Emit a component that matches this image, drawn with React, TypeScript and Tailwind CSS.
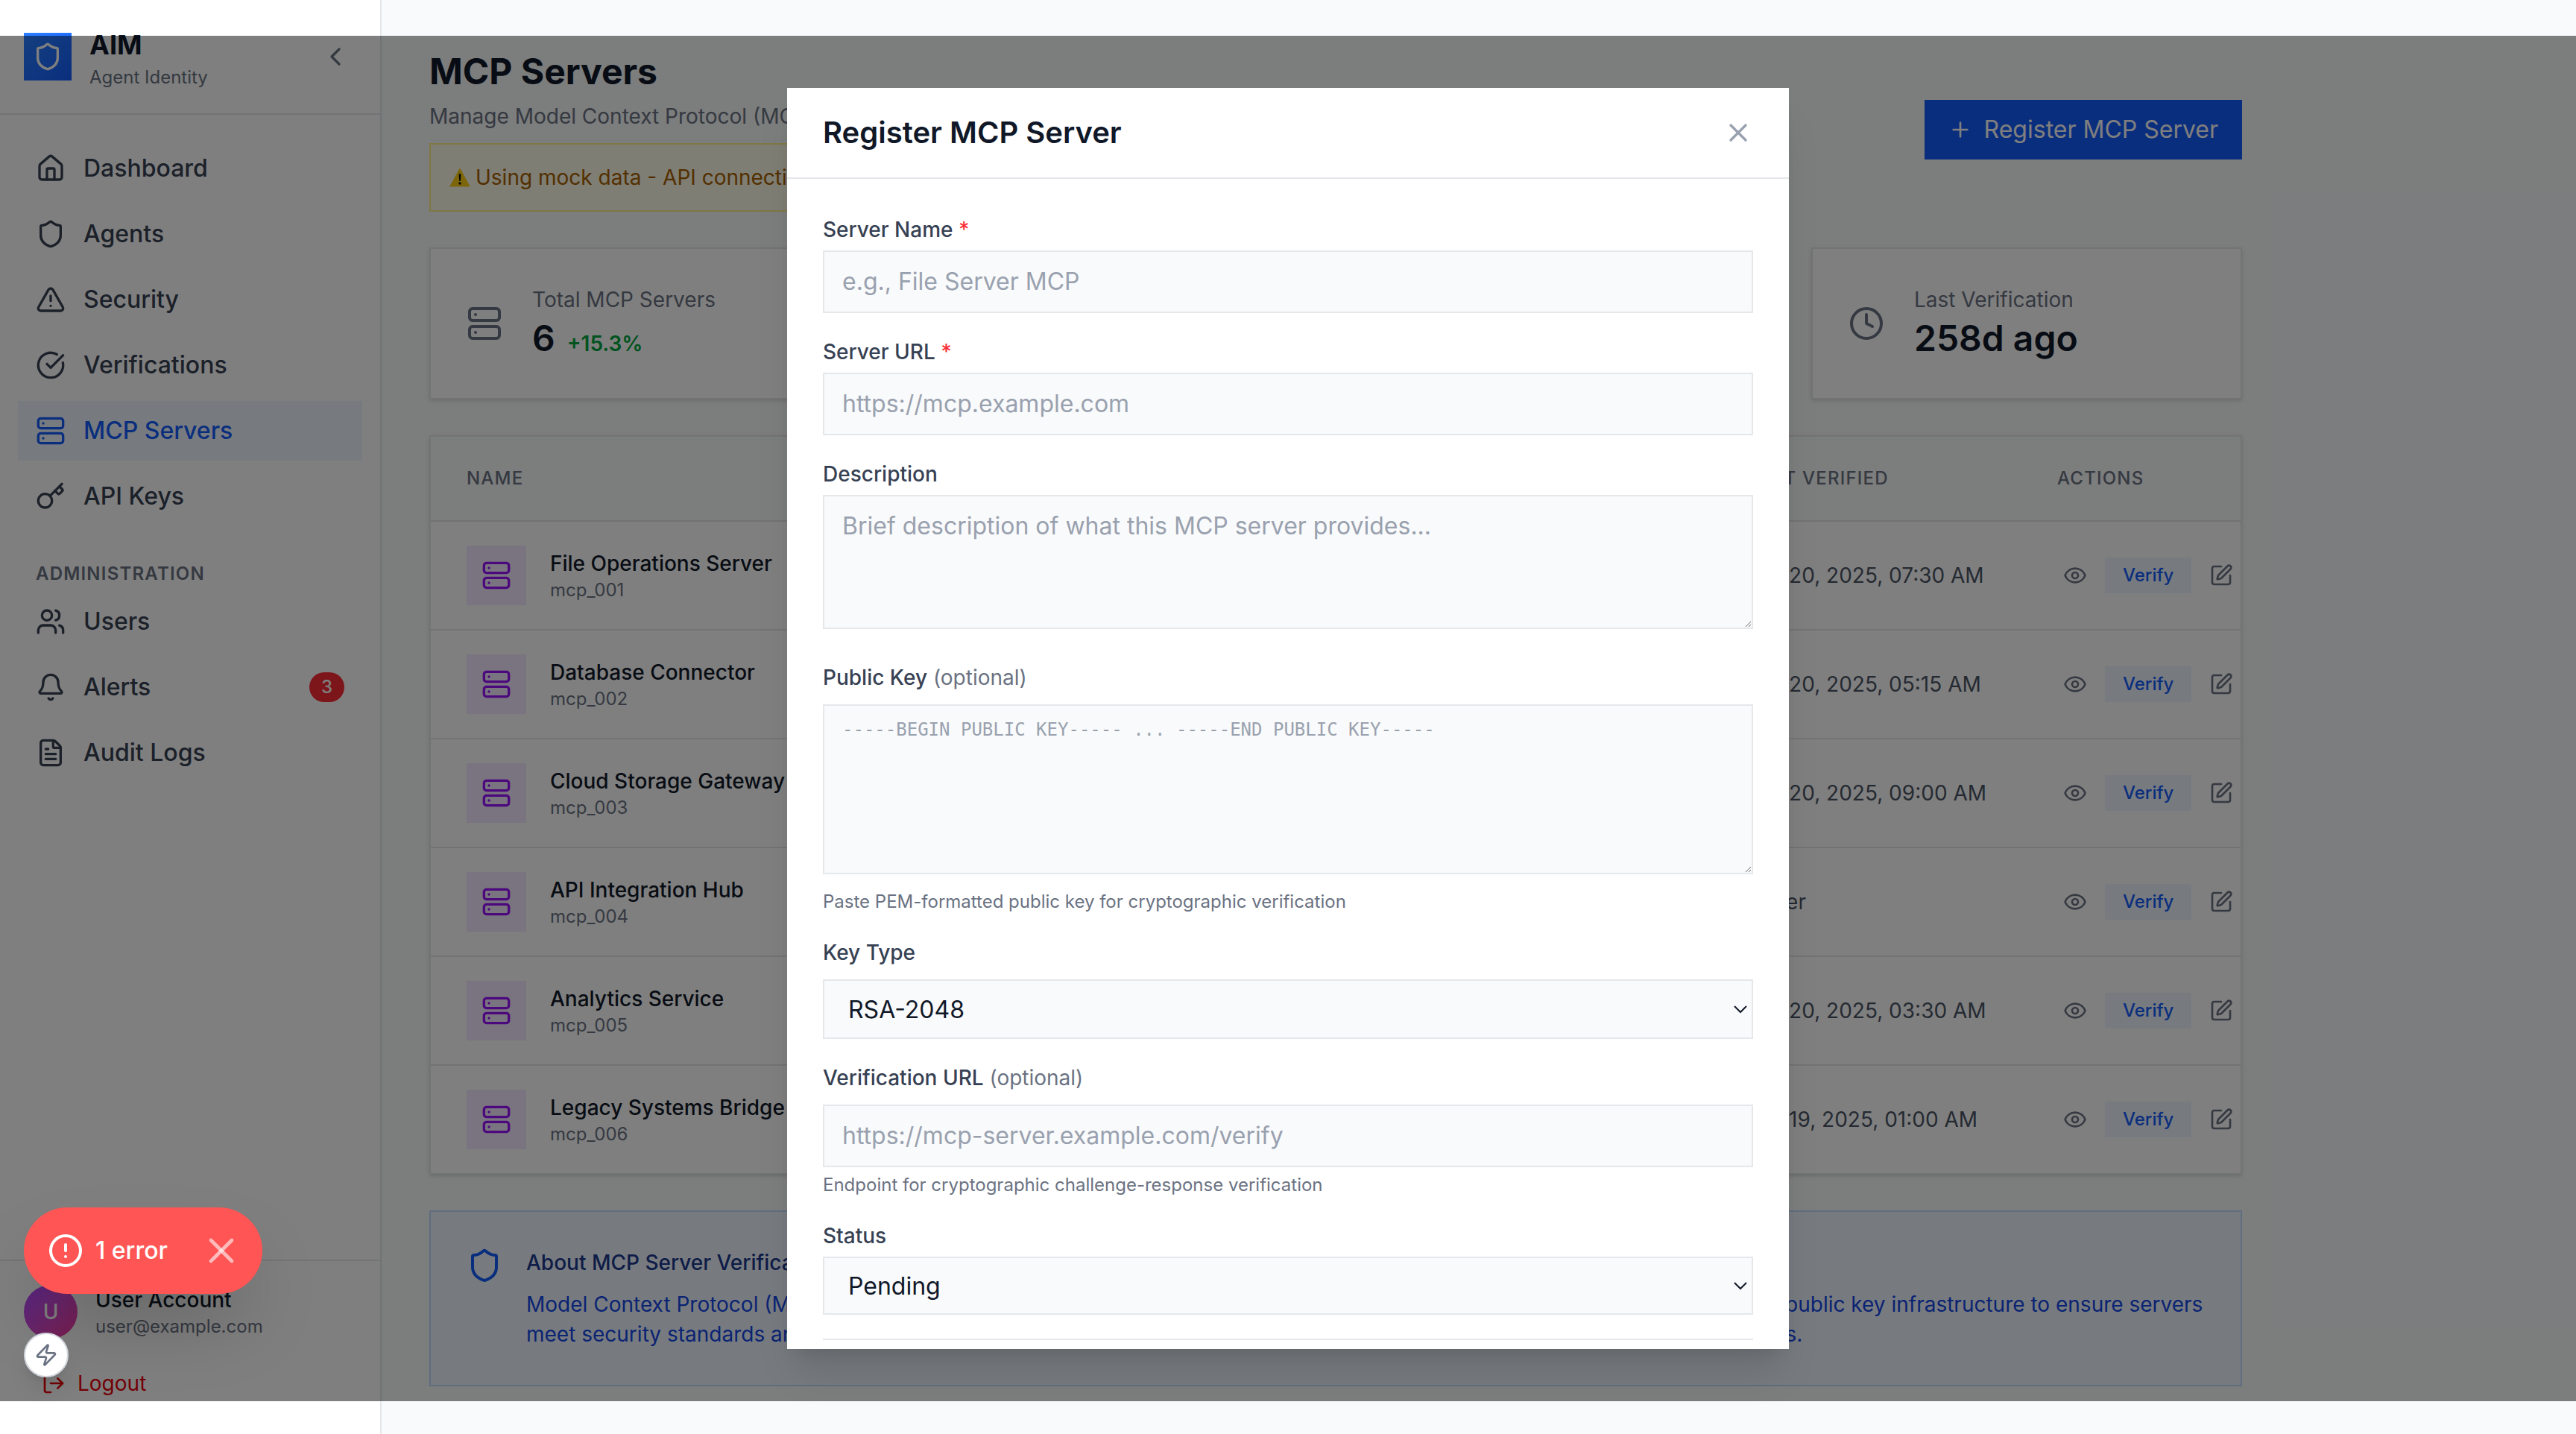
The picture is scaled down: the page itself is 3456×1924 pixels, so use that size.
import { AlertCircle, AlertTriangle, Bell, CheckCircle, ChevronLeft, Clock, Eye, FileText, Home, Key, LogOut, Plus, Server, Shield, SquarePen, Users, X, Zap } from 'lucide-react'
import type { ReactNode } from 'react'

const MAIN_NAV = [
  { label: 'Dashboard', icon: Home },
  { label: 'Agents', icon: Shield },
  { label: 'Security', icon: AlertTriangle },
  { label: 'Verifications', icon: CheckCircle },
  { label: 'MCP Servers', icon: Server, active: true },
  { label: 'API Keys', icon: Key },
]

const ADMIN_NAV = [
  { label: 'Users', icon: Users },
  { label: 'Alerts', icon: Bell, badge: '3' },
  { label: 'Audit Logs', icon: FileText },
]

const SERVERS = [
  { name: 'File Operations Server', id: 'mcp_001', url: 'https://files.example.com', status: 'Verified', verified: 'Jan 20, 2025, 07:30 AM' },
  { name: 'Database Connector', id: 'mcp_002', url: 'https://db.example.com', status: 'Verified', verified: 'Jan 20, 2025, 05:15 AM' },
  { name: 'Cloud Storage Gateway', id: 'mcp_003', url: 'https://storage.example.com', status: 'Verified', verified: 'Jan 20, 2025, 09:00 AM' },
  { name: 'API Integration Hub', id: 'mcp_004', url: 'https://api.example.com', status: 'Pending', verified: 'Never' },
  { name: 'Analytics Service', id: 'mcp_005', url: 'https://analytics.example.com', status: 'Verified', verified: 'Jan 20, 2025, 03:30 AM' },
  { name: 'Legacy Systems Bridge', id: 'mcp_006', url: 'https://legacy.example.com', status: 'Failed', verified: 'Jan 19, 2025, 01:00 AM' },
]

function NavItem({ label, icon: Icon, active, badge }: { label: string; icon: typeof Home; active?: boolean; badge?: string }) {
  return (
    <a className={`flex h-10 items-center gap-3 px-3 text-base font-medium ${active ? 'bg-blue-50 text-blue-600' : 'text-gray-700'}`}>
      <Icon className="h-5 w-5 shrink-0" />
      <span className="flex-1">{label}</span>
      {badge && <span className="rounded-full bg-red-500 px-2 py-0.5 text-xs font-medium text-white">{badge}</span>}
    </a>
  )
}

function Sidebar() {
  return (
    <aside className="flex h-full w-64 shrink-0 flex-col border-r border-gray-200 bg-white">
      <div className="flex items-center justify-between border-b border-gray-200 p-4">
        <div className="flex items-center gap-3">
          <div className="flex h-8 w-8 items-center justify-center bg-linear-to-br from-blue-500 to-blue-600">
            <Shield className="h-5 w-5 text-white" />
          </div>
          <div>
            <div className="text-lg font-bold text-gray-900">AIM</div>
            <div className="text-xs text-gray-500">Agent Identity</div>
          </div>
        </div>
        <button className="p-1 text-gray-500">
          <ChevronLeft className="h-5 w-5" />
        </button>
      </div>

      <nav className="flex-1 px-3 py-4">
        <div className="space-y-1">
          {MAIN_NAV.map((item) => <NavItem key={item.label} {...item} />)}
        </div>
        <div className="mb-1 mt-6 px-3 text-xs font-semibold uppercase tracking-wider text-gray-500">Administration</div>
        <div className="space-y-1">
          {ADMIN_NAV.map((item) => <NavItem key={item.label} {...item} />)}
        </div>
      </nav>

      <div className="border-t border-gray-200 p-4">
        <div className="mb-3 flex items-center gap-3">
          <div className="flex h-9 w-9 items-center justify-center rounded-full bg-linear-to-br from-purple-500 to-pink-500 text-sm font-medium text-white">U</div>
          <div>
            <div className="text-sm font-medium text-gray-900">User Account</div>
            <div className="text-xs text-gray-500">user@example.com</div>
          </div>
        </div>
        <a className="flex items-center gap-2 px-3 py-2 text-sm text-red-600">
          <LogOut className="h-4 w-4" />
          Logout
        </a>
      </div>
    </aside>
  )
}

function StatCard({ icon: Icon, label, value, change }: { icon: typeof Home; label: string; value: string; change?: string }) {
  return (
    <div className="flex items-center gap-5 border border-gray-200 bg-white p-6 shadow-sm">
      <Icon className="h-6 w-6 shrink-0 text-gray-500" />
      <div>
        <div className="text-sm text-gray-500">{label}</div>
        <div className="flex items-baseline gap-2">
          <span className="text-2xl font-semibold text-gray-900">{value}</span>
          {change && <span className="text-sm font-semibold text-green-600">{change}</span>}
        </div>
      </div>
    </div>
  )
}

function ServerTable() {
  const th = 'py-5 px-6 text-left text-xs font-medium uppercase tracking-wider text-gray-500'
  return (
    <div className="mt-6 border border-gray-200 bg-white shadow-sm">
      <table className="w-full table-fixed">
        <colgroup>
          <col className="w-[320px]" />
          <col className="w-[379px]" />
          <col className="w-[160px]" />
          <col className="w-[208px]" />
          <col className="w-[147px]" />
        </colgroup>
        <thead className="bg-gray-50">
          <tr className="border-b border-gray-200">
            <th className={th}>Name</th>
            <th className={th}>URL</th>
            <th className={th}>Status</th>
            <th className={th}>Last Verified</th>
            <th className={th}>Actions</th>
          </tr>
        </thead>
        <tbody className="divide-y divide-gray-200">
          {SERVERS.map((s) => (
            <tr key={s.id}>
              <td className="py-4 pl-6">
                <div className="flex items-center gap-4">
                  <div className="flex h-10 w-10 shrink-0 items-center justify-center bg-purple-100">
                    <Server className="h-5 w-5 text-purple-600" />
                  </div>
                  <div className="whitespace-nowrap">
                    <div className="text-sm font-medium text-gray-900">{s.name}</div>
                    <div className="text-xs text-gray-500">{s.id}</div>
                  </div>
                </div>
              </td>
              <td className="px-6 text-sm text-gray-600">{s.url}</td>
              <td className="px-6 text-sm text-gray-600">{s.status}</td>
              <td className="whitespace-nowrap px-6 text-sm text-gray-600">{s.verified}</td>
              <td className="pl-6">
                <div className="flex items-center gap-2">
                  <button className="p-1 text-gray-500"><Eye className="h-4 w-4" /></button>
                  <button className="bg-blue-50 px-3 py-1 text-xs font-medium text-blue-600">Verify</button>
                  <button className="p-1 text-gray-500"><SquarePen className="h-4 w-4" /></button>
                </div>
              </td>
            </tr>
          ))}
        </tbody>
      </table>
    </div>
  )
}

function Content() {
  return (
    <main className="h-full flex-1 overflow-hidden bg-gray-50">
      <div className="w-[1280px] p-8">
        <div className="flex items-center justify-between">
          <div>
            <h1 className="text-2xl font-bold text-gray-900">MCP Servers</h1>
            <p className="mt-1 text-sm text-gray-500">Manage Model Context Protocol (MCP) servers and their cryptographic verification</p>
            <div className="mt-2 flex w-fit items-center gap-[3px] border border-yellow-200 bg-yellow-50 px-3 py-3 text-sm text-yellow-700">
              <svg viewBox="0 0 16 16" className="h-[15px] w-[15px] shrink-0">
                <path d="M8 1.2 15.4 14.6H.6Z" fill="#facc15" />
                <path d="M7.3 5.5h1.4l-.2 5h-1zM7.2 11.4h1.6v1.6H7.2z" fill="#111" />
              </svg>
              Using mock data - API connection unavailable
            </div>
          </div>
          <button className="flex h-10 items-center gap-2 bg-blue-600 px-4 text-base font-normal text-white">
            <Plus className="h-4 w-4" />
            Register MCP Server
          </button>
        </div>

        <div className="mt-6 grid grid-cols-4 gap-5">
          <StatCard icon={Server} label="Total MCP Servers" value="6" change="+15.3%" />
          <StatCard icon={CheckCircle} label="Verified Servers" value="4" />
          <StatCard icon={Shield} label="Verification Rate" value="66.7%" />
          <StatCard icon={Clock} label="Last Verification" value="258d ago" />
        </div>

        <ServerTable />

        <div className="mt-6 flex gap-4 border border-blue-200 bg-blue-50 p-6">
          <Shield className="h-6 w-6 shrink-0 text-blue-600" />
          <div>
            <h3 className="text-sm font-medium text-blue-900">About MCP Server Verification</h3>
            <p className="mt-2 text-sm text-blue-700">
              Model Context Protocol (MCP) servers must be cryptographically verified before agents run. AIM uses challenge-response and public key infrastructure to ensure servers meet security standards and have not been tampered with. Verification runs on a daily schedule and results are saved to the logs.
            </p>
          </div>
        </div>
      </div>
    </main>
  )
}

function Field({ label, required, optional, tight, hint, children }: { label: string; required?: boolean; optional?: boolean; tight?: boolean; hint?: string; children: ReactNode }) {
  return (
    <div>
      <label className={`block text-sm font-medium text-gray-700 ${tight ? 'mb-1' : 'mb-2'}`}>
        {label}
        {required && <span className="text-red-500"> *</span>}
        {optional && <span className="font-normal text-gray-500"> (optional)</span>}
      </label>
      {children}
      {hint && <p className="mt-1 text-xs text-gray-500">{hint}</p>}
    </div>
  )
}

const inputClass = 'w-full border border-gray-200 bg-gray-50 px-3 py-2 text-base text-gray-900 placeholder:text-gray-400'

function RegisterModal() {
  return (
    <div className="absolute inset-x-0 bottom-[22px] top-6 flex items-center justify-center bg-black/50">
      <div className="h-[846px] w-[672px] overflow-hidden bg-white shadow-xl">
        <div className="flex items-center justify-between border-b border-gray-200 px-6 py-4">
          <h2 className="text-xl font-semibold text-gray-900">Register MCP Server</h2>
          <button className="text-gray-400"><X className="h-5 w-5" /></button>
        </div>
        <form className="space-y-4 p-6">
          <Field label="Server Name" required tight>
            <input className={inputClass} placeholder="e.g., File Server MCP" />
          </Field>
          <Field label="Server URL" required tight>
            <input className={inputClass} placeholder="https://mcp.example.com" />
          </Field>
          <Field label="Description" tight>
            <textarea className={inputClass} rows={3} placeholder="Brief description of what this MCP server provides..." />
          </Field>
          <Field label="Public Key" optional hint="Paste PEM-formatted public key for cryptographic verification">
            <textarea
              className="w-full border border-gray-200 bg-gray-50 px-3 py-2 [font-family:'DejaVu_Sans_Mono',monospace] text-xs text-gray-900 placeholder:text-gray-400"
              rows={6}
              placeholder="-----BEGIN PUBLIC KEY----- ... -----END PUBLIC KEY-----"
            />
          </Field>
          <Field label="Key Type">
            <select className="h-10 w-full border border-gray-200 bg-gray-50 px-3 text-base text-gray-900" defaultValue="RSA-2048">
              <option>RSA-2048</option>
              <option>RSA-4096</option>
              <option>Ed25519</option>
            </select>
          </Field>
          <Field label="Verification URL" optional hint="Endpoint for cryptographic challenge-response verification">
            <input className={inputClass} placeholder="https://mcp-server.example.com/verify" />
          </Field>
          <Field label="Status" tight>
            <select className="h-[39px] w-full border border-gray-200 bg-gray-50 px-3 text-base text-gray-900" defaultValue="Pending">
              <option>Pending</option>
              <option>Verified</option>
              <option>Failed</option>
            </select>
          </Field>
          <div className="flex justify-end gap-3 border-t border-gray-200 pt-4">
            <button type="button" className="border border-gray-200 px-4 py-2 text-sm font-medium text-gray-700">Cancel</button>
            <button type="button" className="bg-blue-600 px-4 py-2 text-sm font-medium text-white">Register Server</button>
          </div>
        </form>
      </div>
    </div>
  )
}

function DevIndicator() {
  return (
    <>
      <div className="absolute left-4 top-[810px] flex h-[58px] w-40 items-center rounded-full bg-[#ff5555] pl-4 text-base font-medium text-white shadow-2xl">
        <AlertCircle className="h-6 w-6 shrink-0" />
        <span className="ml-2">1 error</span>
        <X className="ml-[22px] h-7 w-7 shrink-0 text-white/60" />
      </div>
      <div className="absolute left-4 top-[894px] flex h-[30px] w-[30px] items-center justify-center rounded-full border border-gray-300 bg-white shadow-lg">
        <Zap className="h-4 w-4 text-gray-500" />
      </div>
    </>
  )
}

export default function App() {
  return (
    <div className="relative flex h-[962px] w-[1728px] overflow-hidden bg-white [font-family:Inter,sans-serif] [zoom:2]">
      <Sidebar />
      <Content />
      <RegisterModal />
      <DevIndicator />
    </div>
  )
}
